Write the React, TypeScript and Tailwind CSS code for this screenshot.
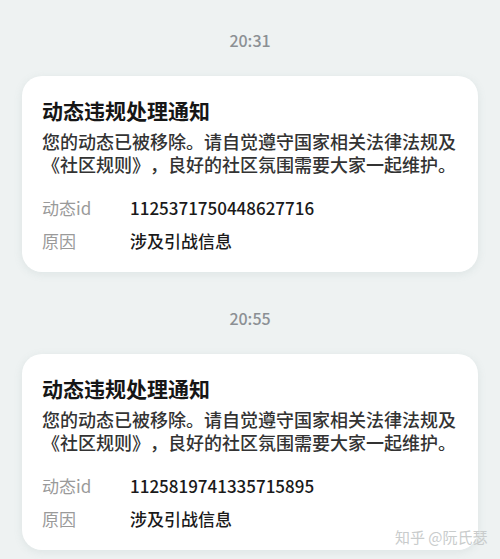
const notices = [
  { time: '20:31', id: '1125371750448627716', reason: '涉及引战信息' },
  { time: '20:55', id: '1125819741335715895', reason: '涉及引战信息' },
]

function NoticeCard({ id, reason }: { id: string; reason: string }) {
  return (
    <div className="mx-[22px] rounded-[20px] bg-white px-5 pt-5 pb-[19px] shadow-[0_2px_8px_rgba(120,150,150,0.14)]">
      <h2 className="text-[21px] font-bold leading-[28px] text-[#161616]">动态违规处理通知</h2>
      <p className="mt-[6px] text-[18px] font-medium leading-[23px] text-[#333] [text-spacing-trim:space-all]">
        您的动态已被移除。请自觉遵守国家相关法律法规及《社区规则》，良好的社区氛围需要大家一起维护。
      </p>
      <div className="mt-5 flex flex-col gap-[9px] text-[17px] leading-[24px]">
        <div className="flex">
          <span className="w-[88px] text-[#9a9a9a]">动态id</span>
          <span className="font-medium text-[#1a1a1a]">{id}</span>
        </div>
        <div className="flex">
          <span className="w-[88px] text-[#9a9a9a]">原因</span>
          <span className="font-medium text-[#1a1a1a]">{reason}</span>
        </div>
      </div>
    </div>
  )
}

export default function App() {
  return (
    <div
      className="relative h-[559px] w-[500px] overflow-hidden bg-[#eef2f2] pt-[30px]"
      style={{ fontFamily: '"Noto Sans CJK SC", "Noto Sans", sans-serif' }}
    >
      {notices.map((n, i) => (
        <div key={n.time} className={i > 0 ? 'mt-9' : ''}>
          <p className="text-center text-[16px] font-medium leading-[20px] text-[#8c9094]">{n.time}</p>
          <div className="mt-[26px]">
            <NoticeCard id={n.id} reason={n.reason} />
          </div>
        </div>
      ))}

      {/* watermark */}
      <span className="absolute left-[395px] top-[527px] text-[15px] leading-[20px] text-[#c9cccc]">
        知乎 @阮氏瑟
      </span>
    </div>
  )
}
